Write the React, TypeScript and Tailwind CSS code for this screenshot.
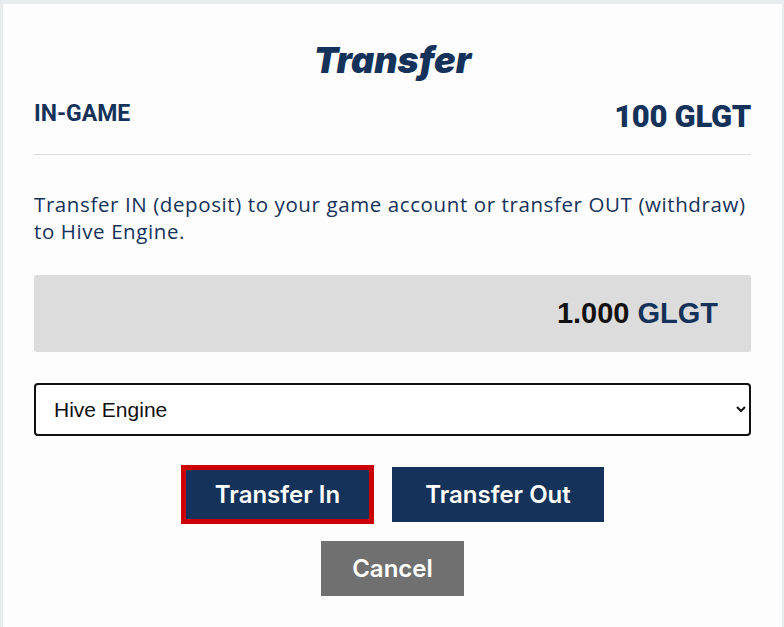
import React from "react";

const navy = "text-[#15325a]";

export default function App() {
  return (
    <div className="min-h-[627px] bg-[#e9ecef] pl-[3px] pt-[4px]">
      <div className="h-[623px] w-[779px] bg-[#fdfdfd] px-[31px] pt-[34px] font-['Inter',sans-serif]">
        <h1 className={`text-center text-[36px] font-black italic leading-[44px] ${navy}`}>
          Transfer
        </h1>

        <div className="mt-[15px] flex items-start justify-between border-b border-[#dcdcdc] pb-[17px]">
          <span className={`pt-[3px] font-['Roboto',sans-serif] text-[23px] font-bold leading-[28px] ${navy}`}>
            IN-GAME
          </span>
          <span className={`font-['Roboto',sans-serif] text-[31px] font-black leading-[40px] tracking-[-0.3px] ${navy}`}>
            100 GLGT
          </span>
        </div>

        <p className={`mt-[36px] font-['Open_Sans',sans-serif] text-[20.5px] leading-[27px] tracking-[0.6px] ${navy}`}>
          Transfer IN (deposit) to your game account or transfer OUT (withdraw) to Hive Engine.
        </p>

        <div className="mt-[30px] flex h-[77px] items-center justify-end rounded-[3px] bg-[#dcdcdc] pr-[33px] font-['Liberation_Sans',sans-serif] text-[29px] font-bold">
          <span className="text-[#111]">1.000</span>
          <span className="ml-[8px] text-[#15325a]">GLGT</span>
        </div>

        <select
          defaultValue="hive"
          className="mt-[31px] block h-[53px] w-full rounded-[4px] border-2 border-[#111] bg-white pl-[14px] pr-[12px] font-['Liberation_Sans',sans-serif] text-[21px] text-[#111]"
        >
          <option value="hive">Hive Engine</option>
        </select>

        <div className="mt-[29px] flex items-center justify-center gap-[18px]">
          <button className="h-[59px] w-[193px] border-[5px] border-[#cc0000] bg-[#15325a] text-[24px] font-semibold text-white">
            Transfer In
          </button>
          <button className="h-[55px] w-[212px] bg-[#15325a] text-[24px] font-semibold text-white">
            Transfer Out
          </button>
        </div>

        <div className="mt-[17px] flex justify-center">
          <button className="h-[55px] w-[143px] bg-[#707070] text-[24px] font-semibold text-white">
            Cancel
          </button>
        </div>
      </div>
    </div>
  );
}
